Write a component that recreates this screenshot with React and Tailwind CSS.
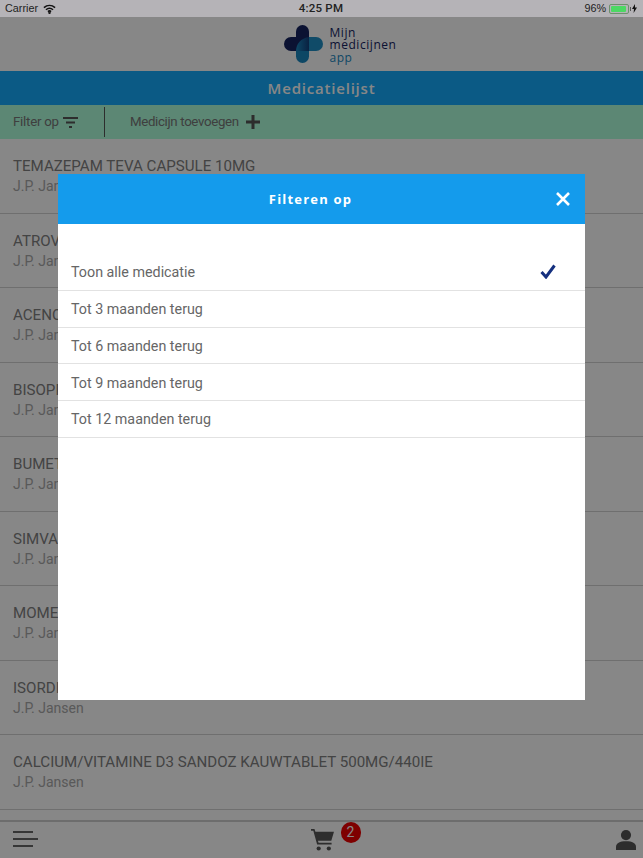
import React from 'react';

const rows = [
  'TEMAZEPAM TEVA CAPSULE 10MG',
  'ATROVENT AEROSOL 20MCG/DO',
  'ACENOCOUMAROL TABLET 1MG',
  'BISOPROLOL TABLET 5MG',
  'BUMETANIDE TABLET 1MG',
  'SIMVASTATINE TABLET 20MG',
  'MOMETASON NEUSSPRAY 50MCG/DO',
  'ISORDIL TABLET 5MG',
  'CALCIUM/VITAMINE D3 SANDOZ KAUWTABLET 500MG/440IE',
];

const filters = ['Toon alle medicatie', 'Tot 3 maanden terug', 'Tot 6 maanden terug', 'Tot 9 maanden terug', 'Tot 12 maanden terug'];

const StatusBar = () => (
  <div className="relative z-20 h-[17px] shrink-0 flex items-center justify-between pl-[5px] pr-[6px] bg-[#b5b3b7] text-[#222] text-[10.8px] font-['Liberation_Sans',sans-serif]">
    <div className="flex-1 flex items-center gap-[5px]">
      <span>Carrier</span>
      <svg width="13" height="10" viewBox="0 0 14 10" fill="none" stroke="#111" strokeWidth="1.7">
        <path d="M1 3.6C4.6.4 9.4.4 13 3.6" />
        <path d="M3.2 5.8c2.3-2 5.3-2 7.6 0" />
        <path d="M5.3 7.8c1-.9 2.4-.9 3.4 0" />
        <circle cx="7" cy="9" r=".5" fill="#111" />
      </svg>
    </div>
    <span className="flex-1 text-center font-['Roboto',sans-serif] font-medium text-[11.5px] tracking-[0.2px]">4:25 PM</span>
    <div className="flex-1 flex items-center justify-end">
      <span className="mr-[3px]">96%</span>
      <div className="w-[20px] h-[10px] border border-[#6d8f6d] rounded-[2px] p-[1px]">
        <div className="h-full w-[94%] bg-[#4cd964] rounded-[1px]" />
      </div>
      <div className="w-[1px] h-[4px] ml-[1px] mr-[1px] bg-[#555]" />
      <svg width="5" height="9" viewBox="0 0 5 9" fill="#111"><path d="M3 0 0 5h2L1.6 9 5 3.6H3z" /></svg>
    </div>
  </div>
);

const Logo = () => (
  <svg width="39" height="38" viewBox="0 0 39 38">
    <defs>
      <linearGradient id="fade" x1="0" y1="0" x2="1" y2="0">
        <stop offset="0" stopColor="#1a87bf" />
        <stop offset="1" stopColor="#123f7c" />
      </linearGradient>
    </defs>
    <path d="M25 12h7a7 7 0 0 1 0 14h-7z" fill="#1f8fc4" />
    <path d="M12 26v5.5a6.5 6.5 0 0 0 13 0V26z" fill="#1a87bf" />
    <rect x="12" y="0" width="13" height="26" rx="6.5" fill="#15235f" />
    <path d="M7 12h6v14H7a7 7 0 0 1 0-14z" fill="#15235f" />
    <rect x="12" y="12" width="13" height="14" fill="#15235f" />
    <path d="M12 26c0-7 5-13 13-14v14z" fill="url(#fade)" />
  </svg>
);

const App = () => {
  return (
    <div className="relative w-[643px] h-[858px] overflow-hidden bg-white flex flex-col font-['Roboto',sans-serif]">
      <StatusBar />

      <div className="h-[54px] shrink-0 flex items-center justify-center gap-[7px] pl-[37px] bg-white">
        <Logo />
        <div className="pt-[3px] text-[12px] leading-[12.5px] font-medium tracking-[0.55px] text-[#15235f] font-['Open_Sans',sans-serif]">
          <div>Mijn</div>
          <div>medicijnen</div>
          <div className="text-[#1a87bf]">app</div>
        </div>
      </div>

      <div className="h-[34px] shrink-0 flex items-center justify-center bg-[#15aafb] text-white text-[15px] font-semibold tracking-[0.8px] font-['Open_Sans',sans-serif]">
        Medicatielijst
      </div>

      <div className="h-[34px] shrink-0 flex items-center bg-[#aeffdb] text-[#777] text-[13.3px] tracking-[-0.25px]">
        <div className="w-[105px] h-[30px] flex items-center gap-[4px] pl-[13px] border-r border-[#555]">
          Filter op
          <svg width="15" height="11" viewBox="0 0 15 11" fill="#555">
            <rect x="0" y="0" width="15" height="2" />
            <rect x="3" y="4.5" width="9" height="2" />
            <rect x="6" y="9" width="3" height="2" />
          </svg>
        </div>
        <div className="flex items-center gap-[7px] pl-[25px] tracking-[-0.35px]">
          Medicijn toevoegen
          <svg width="14" height="14" viewBox="0 0 14 14" fill="#555">
            <rect x="0" y="5.5" width="14" height="3" />
            <rect x="5.5" y="0" width="3" height="14" />
          </svg>
        </div>
      </div>

      <div className="flex-1 min-h-0 overflow-hidden">
        {rows.map((name) => (
          <div key={name} className="h-[74.5px] pt-[17px] pl-[13px] border-b border-[#d2d2d2]">
            <div className="text-[15.1px] leading-[20px] text-[#808080]">{name}</div>
            <div className="text-[14px] leading-[20px] text-[#a8a8a8]">J.P. Jansen</div>
          </div>
        ))}
      </div>

      <div className="relative h-[38px] shrink-0 flex items-center justify-between pl-[13px] pr-[7px] bg-white border-t-2 border-[#cfcfcf]">
        <div className="flex flex-col gap-[5px] mb-[2px]">
          <div className="w-[20px] h-[2px] bg-[#666]" />
          <div className="w-[25px] h-[2px] bg-[#666]" />
          <div className="w-[20px] h-[2px] bg-[#666]" />
        </div>
        <div className="relative mr-[10px]">
          <svg width="23" height="22" viewBox="0 0 24 23" fill="#555">
            <path d="M0 0h3.6l1 2.8H24l-2.8 9.4H7.2l.7 2.2h13.6v1.9H6.4L2.4 1.9H0z" />
            <circle cx="8" cy="20.4" r="2.2" />
            <circle cx="18.6" cy="20.4" r="2.2" />
          </svg>
          <div className="absolute -top-[7px] left-[30px] w-[20px] h-[21px] rounded-full bg-[#ee0000] flex items-center justify-center text-[14px] text-white">2</div>
        </div>
        <svg width="20" height="20" viewBox="0 0 22 22" fill="#555" className="mb-[1px]">
          <circle cx="11" cy="5.6" r="5.6" />
          <path d="M0 22v-3.4c0-4 4-6.1 11-6.1s11 2.1 11 6.1V22z" />
        </svg>
      </div>

      {/* dimmed backdrop with the filter dialog */}
      <div className="absolute inset-x-0 top-[17px] bottom-0 z-10 bg-black/[0.47]" />
      <div className="absolute z-10 left-[58px] top-[174px] w-[527px] h-[526px] bg-white">
        <div className="relative h-[50px] flex items-center justify-center pt-[1px] pr-[22px] bg-[#149bec] text-white text-[13px] font-bold tracking-[1.2px] font-['Open_Sans',sans-serif]">
          Filteren op
          <svg width="14" height="14" viewBox="0 0 14 14" stroke="currentColor" strokeWidth="2.6" className="absolute right-[15px] top-[18px]">
            <path d="M1 1l12 12M13 1L1 13" />
          </svg>
        </div>
        <div className="pt-[30px]">
          {filters.map((label, i) => (
            <div key={label} className="relative h-[36.8px] flex items-center pt-[2px] pl-[13px] border-b border-[#e2e2e2] text-[14.3px] text-[#666]">
              {label}
              {i === 0 && (
                <svg width="16" height="15" viewBox="0 0 16 15" fill="none" stroke="#15307f" strokeWidth="3" className="absolute right-[29px] top-[10px]">
                  <path d="M1.5 8l4.5 5L14.5 1.5" />
                </svg>
              )}
            </div>
          ))}
        </div>
      </div>
    </div>
  );
};

export default App;
